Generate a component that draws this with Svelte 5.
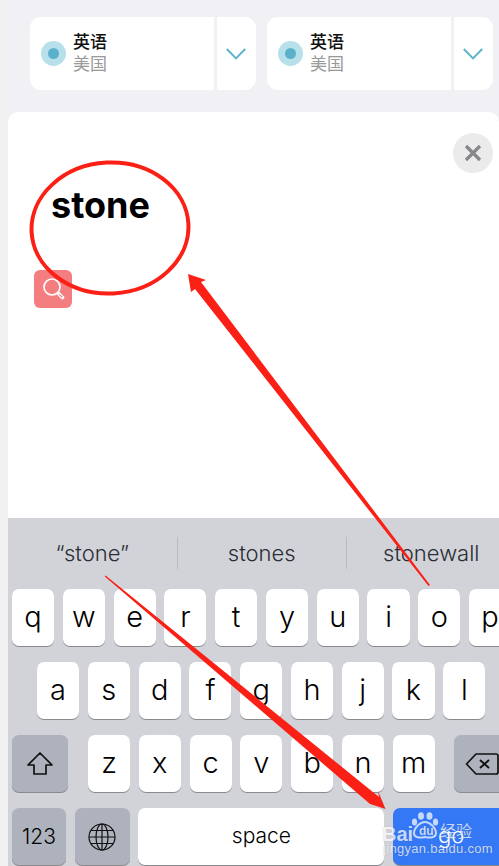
<script>
  const langs = [1, 2];
  const row1 = ["q", "w", "e", "r", "t", "y", "u", "i", "o", "p"];
  const row2 = ["a", "s", "d", "f", "g", "h", "j", "k", "l"];
  const row3 = ["z", "x", "c", "v", "b", "n", "m"];
  const suggestions = ["“stone”", "stones", "stonewall"];
</script>

<div class="page">
  <div class="sheet">
    <div class="selectors">
      {#each langs as lang (lang)}
        <div class="selector">
          <div class="lang">
            <span class="dot"><span class="dot-inner"></span></span>
            <div class="names">
              <span class="name">英语</span>
              <span class="region">美国</span>
            </div>
          </div>
          <div class="toggle">
            <svg width="20" height="12" viewBox="0 0 20 12" fill="none" stroke="#5fb3cb" stroke-width="2">
              <path d="M0.8 1 L10 10.4 L19.2 1" />
            </svg>
          </div>
        </div>
      {/each}
    </div>

    <div class="card">
      <button class="close" aria-label="close">
        <svg width="18" height="18" viewBox="0 0 18 18" stroke="#86868b" stroke-width="3.2" fill="none">
          <path d="M2 2 L16 16 M16 2 L2 16" />
        </svg>
      </button>
      <h1 class="word">stone</h1>
      <div class="search-tag">
        <svg width="26" height="26" viewBox="0 0 26 26" fill="none" stroke="#fff">
          <circle cx="12" cy="11" r="8" stroke-width="1.7" />
          <path d="M19 18 L22.5 21.5" stroke-width="3.8" stroke-linecap="round" />
          <path d="M19.6 18.6 L21.9 20.9" stroke="#f47d80" stroke-width="1.2" stroke-linecap="round" />
        </svg>
      </div>
    </div>

    <div class="keyboard">
      <div class="suggestions">
        {#each suggestions as s (s)}
          <span class="suggestion">{s}</span>
        {/each}
      </div>
      <div class="row row-top">
        {#each row1 as k (k)}
          <span class="key">{k}</span>
        {/each}
      </div>
      <div class="row row-home">
        {#each row2 as k (k)}
          <span class="key">{k}</span>
        {/each}
      </div>
      <div class="row">
        <span class="key fn wide">
          <svg width="28" height="26" viewBox="0 0 28 26" fill="none" stroke="#111" stroke-width="1.7" stroke-linejoin="round">
            <path d="M14 2 L26 14 H20 V23 H8 V14 H2 Z" />
          </svg>
        </span>
        <div class="letters">
          {#each row3 as k (k)}
            <span class="key">{k}</span>
          {/each}
        </div>
        <span class="key fn wide">
          <svg width="34" height="24" viewBox="0 0 34 24" fill="none" stroke="#111" stroke-width="1.7" stroke-linejoin="round">
            <path d="M11 2 H31 A2 2 0 0 1 33 4 V20 A2 2 0 0 1 31 22 H11 L1.5 12 Z" />
            <path d="M15 8 L24 16 M24 8 L15 16" stroke-width="1.9" />
          </svg>
        </span>
      </div>
      <div class="row row-bottom">
        <span class="key fn num">123</span>
        <span class="key fn globe">
          <svg width="28" height="28" viewBox="0 0 28 28" fill="none" stroke="#111" stroke-width="1.2">
            <circle cx="14" cy="14" r="13" />
            <ellipse cx="14" cy="14" rx="6" ry="13" />
            <path d="M14 1 V27 M1 14 H27 M3 7.5 H25 M3 20.5 H25" />
          </svg>
        </span>
        <span class="key space">space</span>
        <span class="key go">go</span>
      </div>
    </div>
  </div>

  <!-- hand drawn annotations on top of the screenshot -->
  <svg class="marks" width="499" height="866" viewBox="0 0 499 866">
    <ellipse cx="110" cy="228" rx="78.5" ry="65.5" fill="none" stroke="#fb2015" stroke-width="4" transform="rotate(-3 110 228)" />
    <path fill="#fb2015" d="M188 274 L206 280 L201 282 L430 585 L428.5 586 L195 289 L191 292 Z" />
    <path fill="#fb2015" d="M105.6 575.4 L379 797 L378 791 L385.5 809 L367 803 L370 804 L104.8 576.6 Z" />
  </svg>

  <div class="watermark">
    <svg class="paw" width="28" height="27" viewBox="0 0 28 27" fill="#fff">
      <ellipse cx="3.5" cy="10" rx="2.6" ry="3.6" />
      <ellipse cx="10" cy="4" rx="3" ry="3.8" />
      <ellipse cx="18.5" cy="4" rx="3" ry="3.8" />
      <ellipse cx="24.5" cy="10" rx="2.6" ry="3.6" />
      <path d="M14 10 C19 10 25 16 25 21 C25 26 19 26 14 25 C9 26 3 26 3 21 C3 16 9 10 14 10 Z" fill="none" stroke="#fff" stroke-width="2" />
    </svg>
    <span class="wm-du">du</span>
    <span class="wm-bai">Bai</span>
    <span class="wm-cn">经验</span>
    <span class="wm-url">jingyan.baidu.com</span>
  </div>
</div>

<style>
  :global(body) {
    margin: 0;
    background: #f0f0f0;
  }

  .page {
    position: relative;
    width: 499px;
    height: 866px;
    overflow: hidden;
    font-family: Inter, "Noto Sans CJK SC", sans-serif;
  }

  .sheet {
    margin-left: 8px;
    width: 491px;
    height: 866px;
    background: #f0f0f5;
    display: flex;
    flex-direction: column;
  }

  .selectors {
    display: flex;
    gap: 11px;
    padding: 17px 0 0 22px;
    height: 73px;
    margin-bottom: 22px;
  }

  .selector {
    width: 226px;
    height: 73px;
    flex: none;
    display: flex;
    background: #fff;
    border-radius: 11px;
  }

  .lang {
    display: flex;
    align-items: center;
    padding-left: 11px;
    gap: 7px;
    box-sizing: border-box;
    border-right: 3px solid #f0f0f5;
    width: 187px;
  }

  .dot {
    width: 25px;
    height: 25px;
    border-radius: 50%;
    background: #b7e0ea;
    display: flex;
    align-items: center;
    justify-content: center;
  }

  .dot-inner {
    width: 11px;
    height: 11px;
    border-radius: 50%;
    background: #5bb0cb;
  }

  .names {
    display: flex;
    flex-direction: column;
    padding-bottom: 3px;
    font-family: "Noto Sans CJK SC", sans-serif;
    font-size: 17px;
    line-height: 22px;
  }

  .name {
    color: #111;
    font-weight: 500;
  }

  .region {
    color: #9a9a9a;
  }

  .toggle {
    flex: 1;
    display: flex;
    align-items: center;
    justify-content: center;
    padding-right: 2px;
  }

  .card {
    position: relative;
    flex: 1;
    background: #fff;
    border-radius: 10px 10px 0 0;
    padding: 71px 0 0 43px;
  }

  .close {
    position: absolute;
    top: 21px;
    right: 6px;
    width: 40px;
    height: 40px;
    border: none;
    padding: 0;
    border-radius: 50%;
    background: #ebebeb;
    display: flex;
    align-items: center;
    justify-content: center;
  }

  .word {
    margin: 0;
    font-size: 36px;
    line-height: 44px;
    font-weight: 700;
    color: #000;
  }

  .search-tag {
    width: 38px;
    height: 38px;
    margin: 43px 0 0 -17px;
    background: #f47d80;
    border-radius: 6px;
    display: flex;
    align-items: center;
    justify-content: center;
  }

  .keyboard {
    height: 348px;
    flex: none;
    background: #d1d3d9;
    display: flex;
    flex-direction: column;
  }

  .suggestions {
    display: flex;
    height: 71px;
    box-sizing: border-box;
  }

  .suggestion {
    flex: none;
    width: 168.5px;
    display: flex;
    align-items: center;
    justify-content: center;
    height: 32px;
    margin-top: 19px;
    font-size: 22px;
    font-weight: 300;
    color: #2b2d33;
    border-left: 1px solid #b9bbc1;
    white-space: nowrap;
  }

  .suggestion:first-child {
    border-left: none;
  }

  .row {
    display: flex;
    gap: 8.7px;
    padding-left: 4px;
    height: 57px;
    margin-bottom: 16px;
  }

  .row-home {
    padding-left: 29px;
  }

  .letters {
    display: flex;
    gap: 8.7px;
    margin: 0 10.4px 0 11.3px;
  }

  .row-bottom {
    margin-bottom: 0;
  }

  .key {
    flex: none;
    width: 42.1px;
    height: 57px;
    box-sizing: border-box;
    background: #fff;
    border-radius: 7px;
    box-shadow: 0 1px 0 #888a8e;
    display: flex;
    align-items: center;
    justify-content: center;
    font-size: 29px;
    font-weight: 300;
    color: #000;
    padding-bottom: 3px;
  }

  .fn {
    background: #adb2bc;
    padding-bottom: 0;
  }

  .wide {
    width: 56px;
  }

  .num {
    width: 54px;
    font-size: 21px;
    font-weight: 300;
  }

  .globe {
    width: 55px;
  }

  .space {
    width: 246px;
    font-size: 21px;
    font-weight: 300;
  }

  .go {
    width: 116px;
    background: #3478f6;
    color: #fff;
    font-size: 22px;
    font-weight: 300;
  }

  .marks {
    position: absolute;
    left: 0;
    top: 0;
    pointer-events: none;
  }

  .watermark {
    position: absolute;
    left: 380px;
    top: 810px;
    width: 119px;
    height: 56px;
    color: #fff;
    opacity: 0.72;
    font-family: "Liberation Sans", "Noto Sans CJK SC", sans-serif;
    text-shadow: 0 0 1px rgba(0, 0, 0, 0.35);
  }

  .paw {
    position: absolute;
    left: 31px;
    top: 2px;
  }

  .wm-du {
    position: absolute;
    left: 39px;
    top: 15px;
    font-size: 12px;
    font-weight: 700;
    line-height: 12px;
  }

  .wm-bai {
    position: absolute;
    left: 2px;
    top: 14px;
    font-size: 20px;
    line-height: 20px;
    font-weight: 700;
  }

  .wm-cn {
    position: absolute;
    left: 60px;
    top: 13px;
    font-size: 16px;
    line-height: 18px;
  }

  .wm-url {
    position: absolute;
    left: 3px;
    top: 32px;
    font-size: 13px;
    line-height: 14px;
    letter-spacing: 0.3px;
    white-space: nowrap;
  }
</style>
